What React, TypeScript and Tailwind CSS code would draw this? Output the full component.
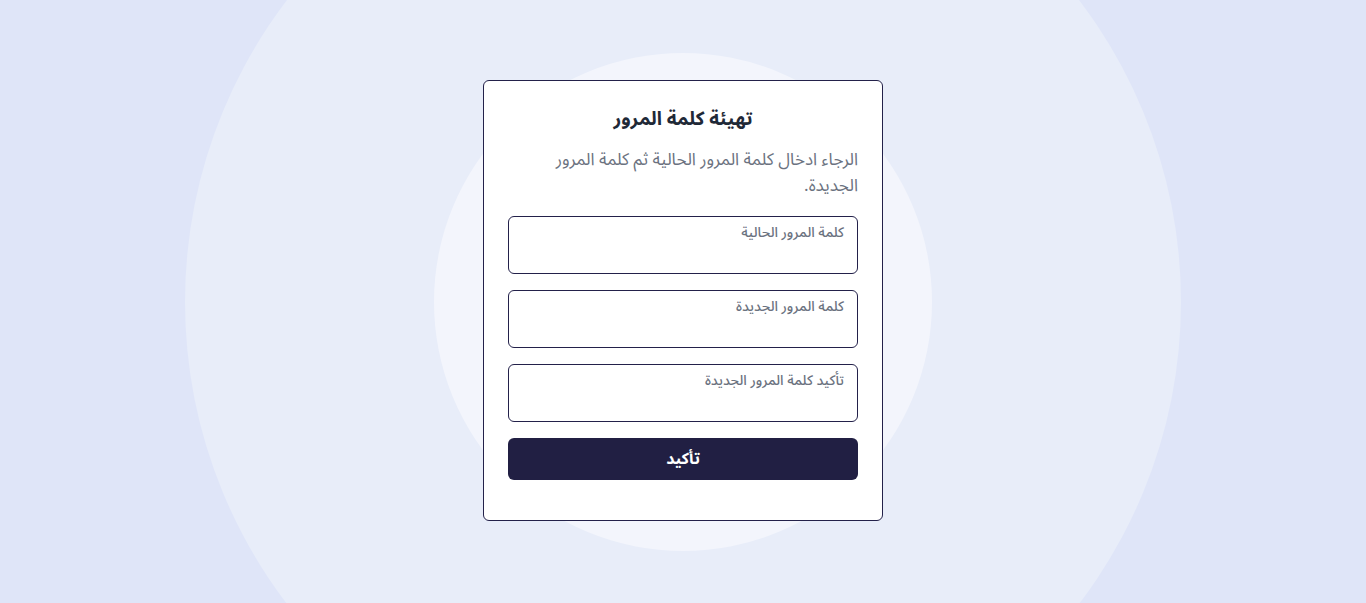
export default function App() {
  return (
    <div
      dir="rtl"
      className="relative flex h-[603px] w-full items-center justify-center overflow-hidden bg-[#dfe5f8]"
      style={{ fontFamily: '"Noto Sans Arabic", "Noto Sans", "DejaVu Sans", sans-serif' }}
    >
      {/* decorative rings */}
      <div className="pointer-events-none absolute left-1/2 top-1/2 h-[996px] w-[996px] -translate-x-1/2 -translate-y-1/2 rounded-full bg-[#e8edf9]" />
      <div className="pointer-events-none absolute left-1/2 top-1/2 h-[498px] w-[498px] -translate-x-1/2 -translate-y-1/2 rounded-full bg-[#f3f5fc]" />

      <div className="relative -mt-[2px] w-[400px] rounded-md border border-[#23214a] bg-white p-6 pb-10">
        <h1 className="text-center text-[19px] font-bold leading-7 text-[#1f2937]">
          تهيئة كلمة المرور
        </h1>
        <p className="mt-[14px] text-right text-[17px] leading-[26px] text-[#6b7280]">
          الرجاء ادخال كلمة المرور الحالية ثم كلمة المرور الجديدة.
        </p>

        <form className="mt-[17px] flex flex-col gap-4" onSubmit={(e) => e.preventDefault()}>
          {["كلمة المرور الحالية", "كلمة المرور الجديدة", "تأكيد كلمة المرور الجديدة"].map((label) => (
            <label
              key={label}
              className="flex h-[58px] flex-col rounded-md border border-[#23214a] bg-white px-[13px] pt-[6px]"
            >
              <span className="text-[14px] font-medium leading-5 text-[#6b7280]">{label}</span>
              <input
                type="password"
                className="w-full bg-transparent text-sm text-[#1f2937] outline-none"
              />
            </label>
          ))}

          <button
            type="submit"
            className="h-[42px] w-full rounded-md bg-[#211f43] text-[16px] font-bold text-white"
          >
            تأكيد
          </button>
        </form>
      </div>
    </div>
  );
}
